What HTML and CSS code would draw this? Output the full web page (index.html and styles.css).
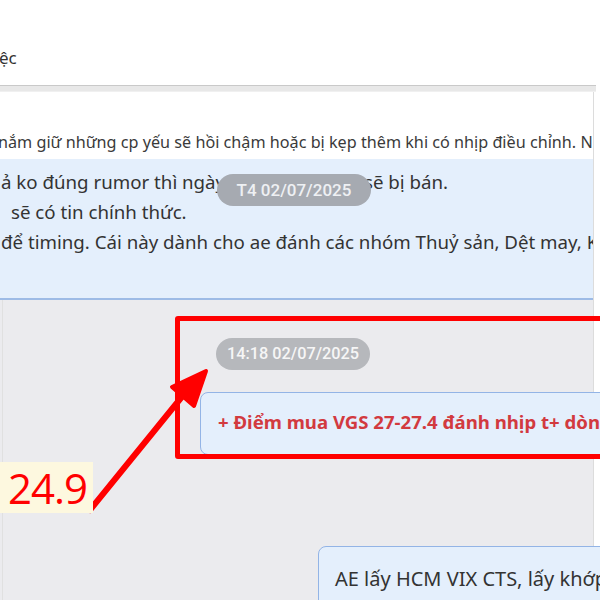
FILE: index.html
```html
<!DOCTYPE html>
<html lang="vi">
<head>
    <meta charset="UTF-8">
    <title>Nhóm tín hiệu</title>
    <link rel="stylesheet" href="styles.css">
</head>
<body>
    <div class="header">
        <span class="header-title">ệc</span>
    </div>
    <div class="hscroll"></div>
    <div class="chat">
        <p class="plain-line">nắm giữ những cp yếu sẽ hồi chậm hoặc bị kẹp thêm khi có nhịp điều chỉnh. Nếu</p>
        <div class="bubble-wide">
            <p class="line">ả ko đúng rumor thì ngày mai những mã sẽ bị bán.</p>
            <p class="line indent">sẽ có tin chính thức.</p>
            <p class="line">để timing. Cái này dành cho ae đánh các nhóm Thuỷ sản, Dệt may, KCN</p>
            <span class="pill pill-float">T4 02/07/2025</span>
        </div>
        <div class="thread">
            <div class="msg-group">
                <span class="pill">14:18 02/07/2025</span>
                <div class="bubble bubble-signal">+ Điểm mua VGS 27-27.4 đánh nhịp t+ dòng</div>
            </div>
            <div class="bubble bubble-last">AE lấy HCM VIX CTS, lấy khớp</div>
        </div>
    </div>

    <div class="annot-rect"></div>
    <svg class="annot-arrow" width="130" height="150" viewBox="0 0 130 150">
        <line x1="10" y1="142" x2="105" y2="25" stroke="#f00" stroke-width="6" stroke-linecap="round"/>
        <polygon points="126,3 92,19 114,38" fill="#f00" stroke="#f00" stroke-width="4" stroke-linejoin="round"/>
    </svg>
    <div class="annot-label">24.9</div>
</body>
</html>
```

FILE: styles.css
```css
body {
    margin: 0;
    width: 600px;
    height: 600px;
    overflow: hidden;
    position: relative;
    font-family: 'Noto Sans', 'Open Sans', sans-serif;
    color: #333;
    background: #fff;
}

p {
    margin: 0;
}

.header {
    height: 85px;
    display: flex;
    align-items: flex-start;
    padding-top: 46px;
    box-sizing: border-box;
}

.header-title {
    font-size: 17px;
    line-height: 24px;
    margin-left: -1px;
}

.hscroll {
    height: 5px;
    margin-right: 4px;
    border-top: 1px solid #c9c9c9;
    background: #e8e8e8;
    border-bottom: 1px solid #f0f0f0;
}

.chat {
    height: 508px;
    margin-right: 6px;
    border-right: 1px solid #dcdcdc;
    background: #ebebee;
    display: flex;
    flex-direction: column;
}

.plain-line {
    flex-shrink: 0;
    background: #fff;
    font-size: 16.2px;
    white-space: nowrap;
    overflow: hidden;
    height: 67px;
    line-height: 22px;
    padding-top: 39px;
    box-sizing: border-box;
    margin-left: -2px;
    color: #3a3a3a;
}

.bubble-wide {
    flex-shrink: 0;
    position: relative;
    height: 141px;
    background: #e4effc;
    border-bottom: 2px solid #9dbbe6;
    box-sizing: border-box;
    padding-top: 8px;
    overflow: hidden;
}

.line {
    font-size: 18.7px;
    line-height: 30px;
    color: #333;
    margin-left: 1px;
    white-space: nowrap;
}

.line.indent {
    margin-left: 11px;
}

.pill {
    display: inline-block;
    height: 32px;
    line-height: 32px;
    padding: 0 10px;
    border-radius: 16px;
    background: #b6b8bc;
    color: #f6f6f6;
    font-family: Roboto, 'Noto Sans', sans-serif;
    font-size: 16.3px;
    font-weight: 500;
}

.pill-float {
    position: absolute;
    left: 217px;
    top: 15px;
    width: 154px;
    box-sizing: border-box;
    text-align: center;
    padding: 0;
    background: #a6aab1;
    color: #eef0f3;
    font-size: 17px;
}

.thread {
    flex-shrink: 0;
    display: flex;
    flex-direction: column;
    padding-top: 38px;
    border-left: 1px solid #e0e0e0;
    margin-left: 2px;
}

.msg-group {
    display: flex;
    flex-direction: column;
    align-items: flex-start;
    gap: 22px;
    padding-left: 213px;
}

.msg-group .pill {
    width: 154px;
    box-sizing: border-box;
    text-align: center;
    padding: 0;
}

.bubble {
    background: #e4effc;
    border: 1px solid #93b4e6;
    border-radius: 8px;
    white-space: nowrap;
    overflow: hidden;
}

.bubble-signal {
    margin-left: -16px;
    height: 63px;
    width: 440px;
    box-sizing: border-box;
    padding: 16px 0 0 17px;
    color: #d23a3f;
    font-weight: 700;
    font-size: 18.6px;
}

.bubble-last {
    margin-top: 91px;
    margin-left: 315px;
    height: 70px;
    width: 320px;
    box-sizing: border-box;
    padding: 18px 0 0 16px;
    color: #333;
    font-size: 20px;
}

/* annotation layer drawn over the screenshot */
.annot-rect {
    position: absolute;
    left: 175px;
    top: 316px;
    width: 460px;
    height: 143px;
    box-sizing: border-box;
    border: 5px solid #f00;
    border-radius: 3px;
}

.annot-arrow {
    position: absolute;
    left: 80px;
    top: 368px;
}

.annot-label {
    position: absolute;
    left: 0;
    top: 462px;
    width: 93px;
    height: 51px;
    background: #fdf8df;
    color: #f00;
    font-family: 'Open Sans', sans-serif;
    font-size: 42px;
    line-height: 51px;
    padding-left: 8px;
    box-sizing: border-box;
    letter-spacing: -1px;
}
```
